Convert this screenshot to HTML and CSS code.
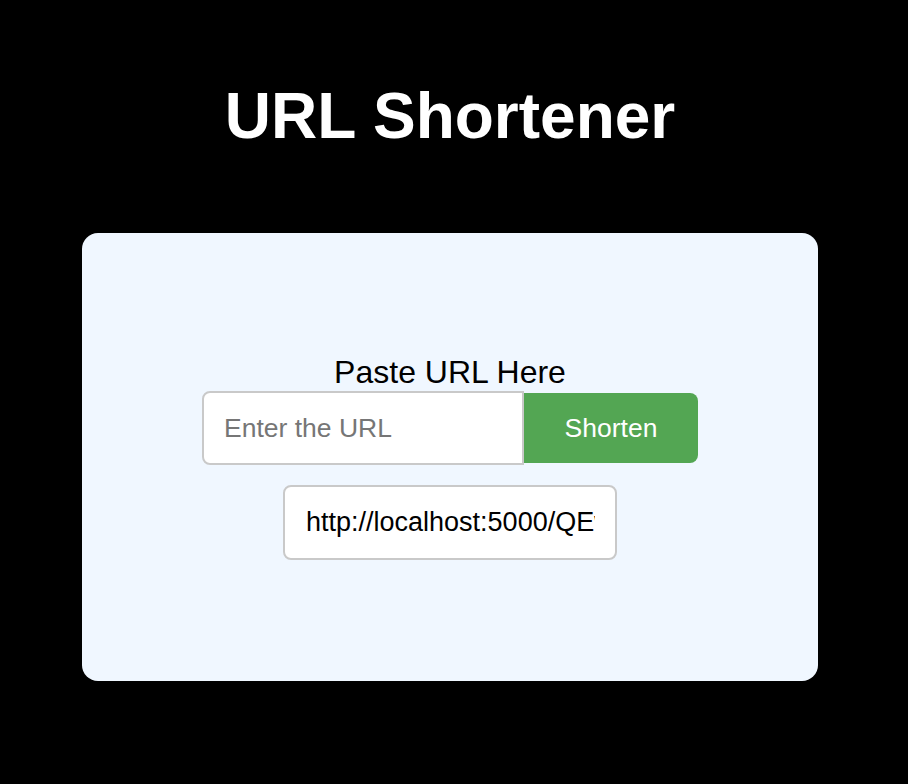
FILE: index.html
```html
<!DOCTYPE html>
<html lang="en">
<head>
<meta charset="utf-8">
<title>URL Shortener</title>
<link rel="stylesheet" href="styles.css">
</head>
<body>
<main class="page">
  <h1 class="title">URL Shortener</h1>
  <section class="card">
    <label class="label" for="url">Paste URL Here</label>
    <form class="row" onsubmit="return false">
      <input class="url-input" id="url" type="text" placeholder="Enter the URL">
      <button class="btn" type="submit">Shorten</button>
    </form>
    <input class="result" type="text" value="http://localhost:5000/QEwXz9" readonly>
  </section>
</main>
</body>
</html>
```

FILE: styles.css
```css
html, body {
  margin: 0;
  padding: 0;
  background: #000;
}
body {
  font-family: "Liberation Sans", Arial, Helvetica, sans-serif;
}
.page {
  display: flex;
  flex-direction: column;
  align-items: center;
  padding: 79px 90px 0 82px;
}
.title {
  margin: 0 0 80px;
  font-size: 64px;
  font-weight: bold;
  line-height: 74px;
  color: #fff;
}
.card {
  box-sizing: border-box;
  width: 736px;
  height: 448px;
  background: #f0f7ff;
  border-radius: 16px;
  display: flex;
  flex-direction: column;
  align-items: center;
  justify-content: center;
}
.label {
  font-size: 32px;
  line-height: 37px;
  color: #000;
}
.row {
  display: flex;
  align-items: center;
  margin: 0;
}
.url-input {
  box-sizing: border-box;
  width: 322px;
  height: 74px;
  padding: 0 20px;
  border: 2px solid #c9c9c9;
  border-radius: 8px 0 0 8px;
  background: #fff;
  font-family: inherit;
  font-size: 26.5px;
  color: #000;
  outline: none;
}
.url-input::placeholder {
  color: #767676;
}
.btn {
  box-sizing: border-box;
  width: 174px;
  height: 70px;
  border: none;
  border-radius: 0 8px 8px 0;
  background: #53a653;
  color: #fff;
  font-family: inherit;
  font-size: 26.5px;
  padding: 0;
  cursor: pointer;
}
.result {
  box-sizing: border-box;
  margin-top: 20px;
  width: 334px;
  height: 75px;
  padding: 0 20px 0 21px;
  border: 2px solid #c9c9c9;
  border-radius: 8px;
  background: #fff;
  font-family: inherit;
  font-size: 27px;
  color: #000;
  outline: none;
}
```
